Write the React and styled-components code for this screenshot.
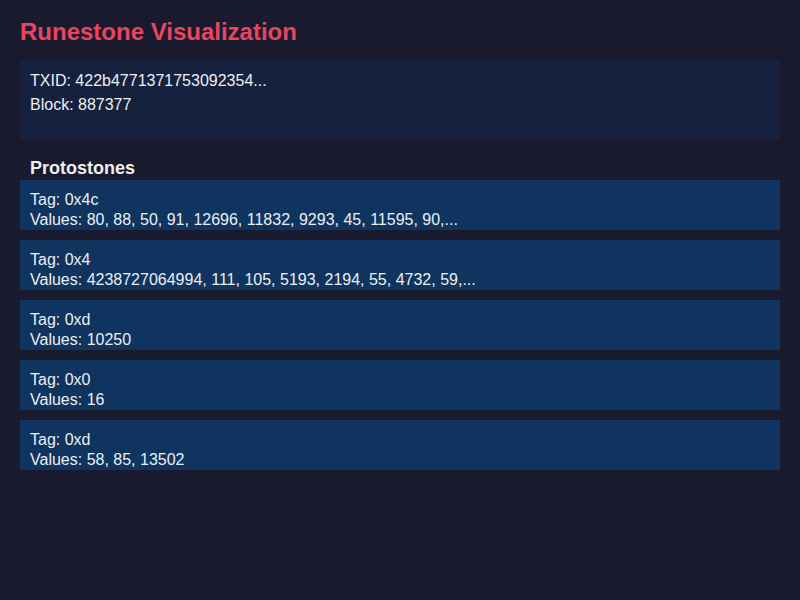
import React from 'react';
import styled, { createGlobalStyle } from 'styled-components';

const GlobalStyle = createGlobalStyle`
  html, body {
    margin: 0;
    padding: 0;
    background: #1a1a2e;
  }
  * {
    box-sizing: border-box;
  }
`;

const Page = styled.div`
  min-height: 600px;
  padding: 18px 20px 20px;
  background: #1a1a2e;
  color: #eeeeee;
  font-family: 'Liberation Sans', Arial, sans-serif;
  font-size: 16px;
`;

const Title = styled.h1`
  margin: 0 0 14px;
  font-size: 24px;
  line-height: 28px;
  font-weight: bold;
  color: #e94560;
`;

const InfoBox = styled.div`
  height: 80px;
  padding: 12px 10px 10px;
  background: #16213e;
`;

const InfoLine = styled.p`
  margin: 0 0 6px;
  line-height: normal;
`;

const SectionTitle = styled.h2`
  margin: 18px 10px 2px;
  font-size: 18px;
  line-height: 20px;
  font-weight: bold;
`;

const List = styled.div`
  display: flex;
  flex-direction: column;
  gap: 10px;
`;

const Item = styled.div`
  height: 50px;
  padding: 10px 10px 0;
  background: #0f3460;
  line-height: 20px;
  overflow: hidden;
`;

const protostones = [
  { tag: '0x4c', values: '80, 88, 50, 91, 12696, 11832, 9293, 45, 11595, 90,...' },
  { tag: '0x4', values: '4238727064994, 111, 105, 5193, 2194, 55, 4732, 59,...' },
  { tag: '0xd', values: '10250' },
  { tag: '0x0', values: '16' },
  { tag: '0xd', values: '58, 85, 13502' },
];

const App = () => {
  return (
    <Page>
      <GlobalStyle />
      <Title>Runestone Visualization</Title>
      <InfoBox>
        <InfoLine>TXID: 422b4771371753092354...</InfoLine>
        <InfoLine>Block: 887377</InfoLine>
      </InfoBox>
      <SectionTitle>Protostones</SectionTitle>
      <List>
        {protostones.map((p, i) => (
          <Item key={i}>
            <div>Tag: {p.tag}</div>
            <div>Values: {p.values}</div>
          </Item>
        ))}
      </List>
    </Page>
  );
};

export default App;
